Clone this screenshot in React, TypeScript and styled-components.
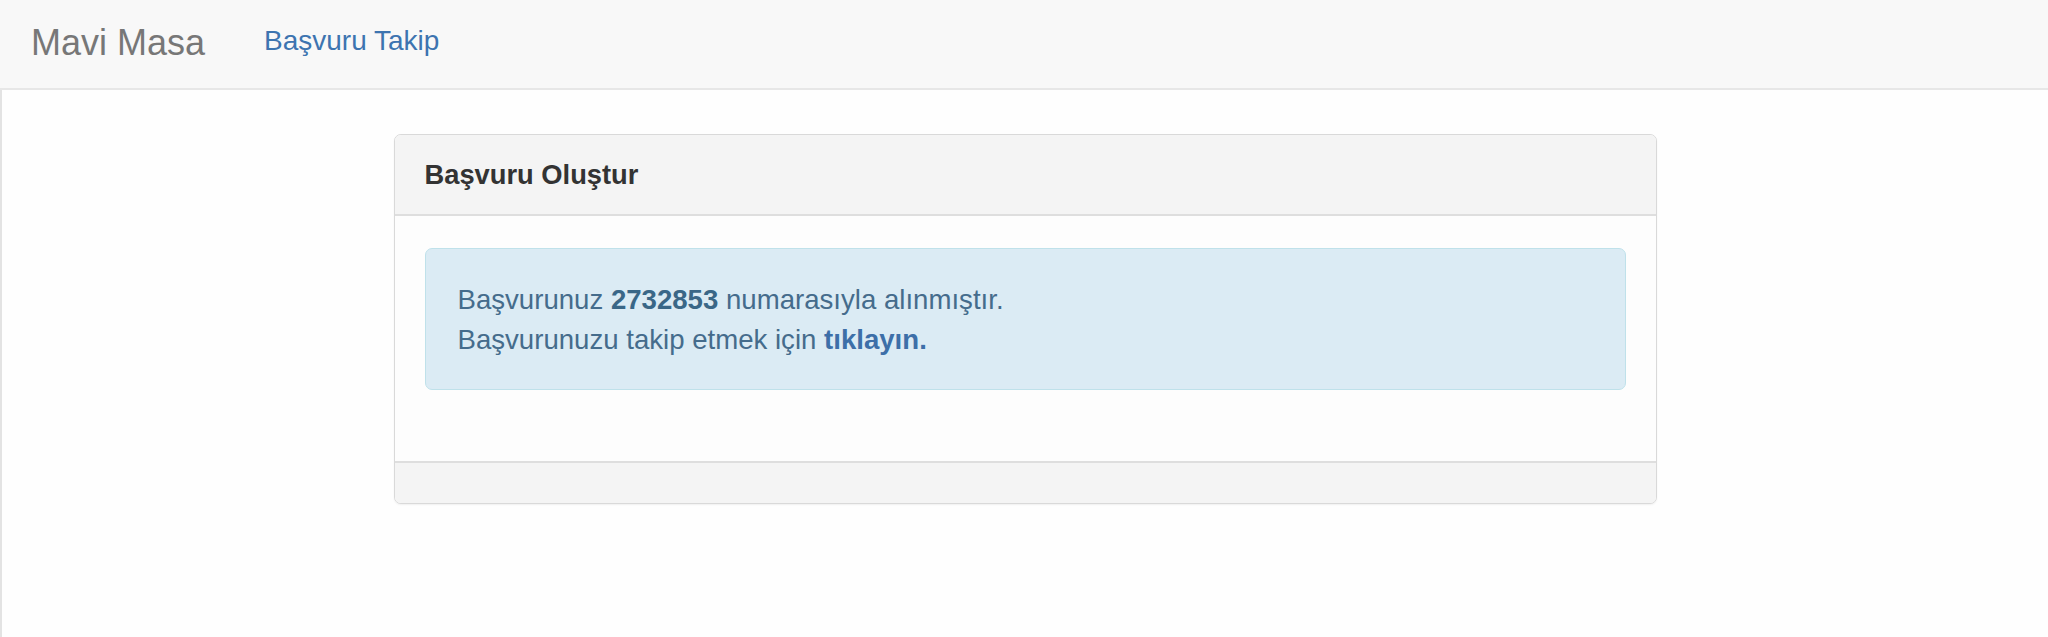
import styled, { createGlobalStyle } from 'styled-components';

const GlobalStyle = createGlobalStyle`
    html, body {
        margin: 0;
        padding: 0;
        background: #fefefe;
        font-family: 'Liberation Sans', Arial, Helvetica, sans-serif;
    }
    * {
        box-sizing: border-box;
    }
`
const Page = styled.div`
    min-height: 637px;
    display: flex;
    flex-direction: column;
`
const Navbar = styled.nav`
    height: 90px;
    background: #f8f8f8;
    border-bottom: 2px solid #e7e7e7;
    display: flex;
    align-items: center;
    padding-left: 31px;
    gap: 59px;
`
const Brand = styled.a`
    font-size: 36px;
    color: #777;
    text-decoration: none;
    line-height: 1;
    margin-top: -3px;
`
const NavLink = styled.a`
    font-size: 28px;
    color: #3d74b0;
    text-decoration: none;
    line-height: 1;
    margin-top: -7px;
`
const Main = styled.main`
    flex: 1;
    border-left: 2px solid #e3e3e3;
    padding-top: 44px;
    display: flex;
    justify-content: center;
`
const Panel = styled.section`
    width: 1263px;
    border: 1px solid #d9d9d9;
    border-radius: 7px;
    background: #fdfdfd;
    box-shadow: 0 1px 2px rgba(0, 0, 0, .06);
    overflow: hidden;
    align-self: flex-start;
`
const PanelHeading = styled.header`
    background: #f4f4f4;
    border-bottom: 2px solid #dedede;
    padding: 24px 30px 23px;
`
const PanelTitle = styled.h3`
    margin: 0;
    font-size: 27.3px;
    line-height: 32px;
    font-weight: 700;
    color: #333;
`
const PanelBody = styled.div`
    padding: 32px 30px 32px;
`
const PanelFooter = styled.footer`
    height: 42px;
    background: #f4f4f4;
    border-top: 2px solid #dedede;
`
const Alert = styled.div`
    background: #dbebf4;
    border: 1px solid #bfe1ea;
    border-radius: 7px;
    color: #456c8c;
    font-size: 27.6px;
    line-height: 40px;
    padding: 31px 32px 29px;
    margin-bottom: 39px;
`
const Strong = styled.b<{ link?: boolean }>`
    font-weight: 700;
    color: ${props => props.link ? '#3d6fa8' : '#3a6787'};
`

function App() {
    return (
        <Page>
            <GlobalStyle />
            <Navbar>
                <Brand href="#">Mavi Masa</Brand>
                <NavLink href="#">Başvuru Takip</NavLink>
            </Navbar>
            <Main>
                <Panel>
                    <PanelHeading>
                        <PanelTitle>Başvuru Oluştur</PanelTitle>
                    </PanelHeading>
                    <PanelBody>
                        <Alert>
                            Başvurunuz <Strong>2732853</Strong> numarasıyla alınmıştır.
                            <br />
                            Başvurunuzu takip etmek için <Strong link>tıklayın.</Strong>
                        </Alert>
                    </PanelBody>
                    <PanelFooter />
                </Panel>
            </Main>
        </Page>
    )
}

export default App;
